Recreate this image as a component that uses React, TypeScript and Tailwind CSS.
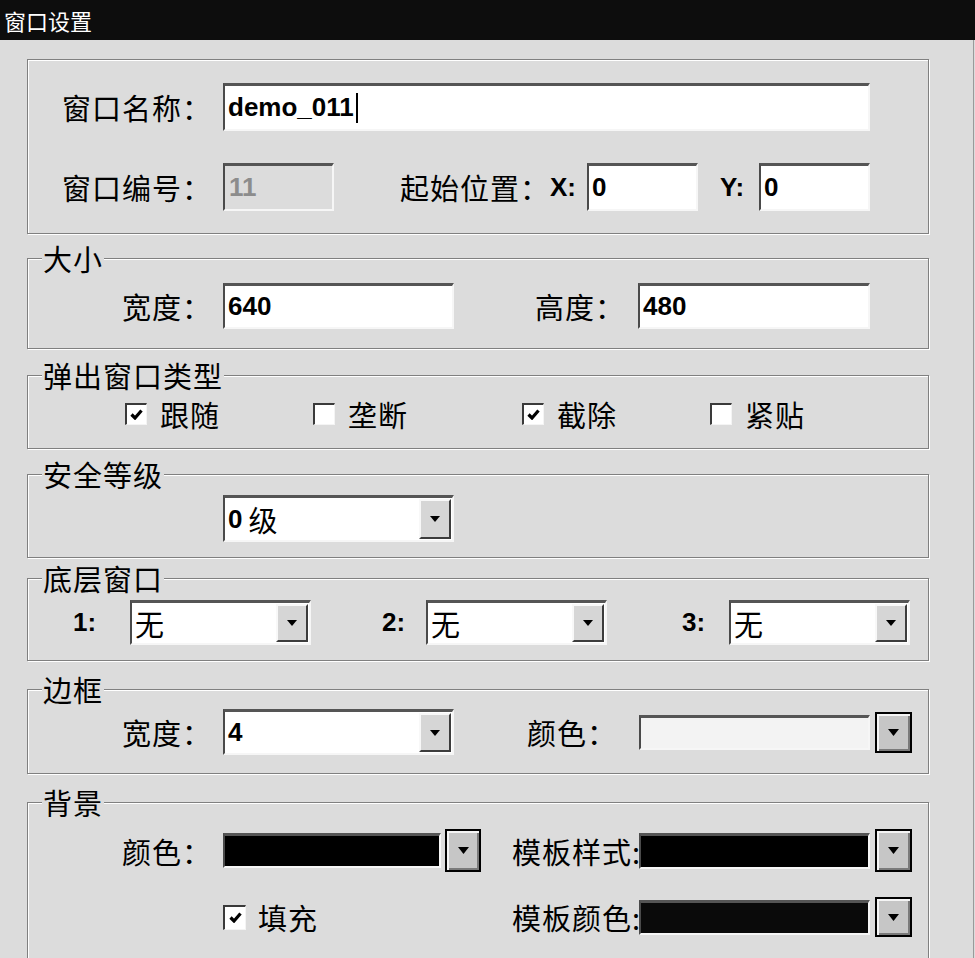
import React from "react";

const CJK = "font-['Noto_Sans_CJK_SC','Liberation_Sans',sans-serif] text-[29px] tracking-[1px] text-black";
const LAT = "font-['Liberation_Sans',Arial,sans-serif] font-bold text-[26px] text-black";
const SUNKEN =
  "border-t-[3px] border-l-[2px] border-r-2 border-b-2 border-t-[#555] border-l-[#4a4a4a] border-r-[#f6f6f6] border-b-[#f6f6f6]";

function Group({ title, className = "", children }: { title?: string; className?: string; children: React.ReactNode }) {
  return (
    <div className={`w-[902px] border border-[#808080] shadow-[inset_1px_1px_0_#fff,1px_1px_0_#fff] ${className}`}>
      {title && (
        <div className={`-mt-[16px] ml-[14px] w-fit bg-[#dcdcdc] px-[1px] h-[30px] leading-[30px] whitespace-nowrap ${CJK}`}>{title}</div>
      )}
      {children}
    </div>
  );
}

function Tri({ w = 10, h = 6 }: { w?: number; h?: number }) {
  return (
    <svg width={w} height={h} viewBox={`0 0 ${w} ${h}`}>
      <polygon points={`0,0 ${w},0 ${w / 2},${h}`} fill="#000" />
    </svg>
  );
}

function Label({ text, className = "" }: { text: string; className?: string }) {
  return <div className={`${CJK} leading-[32px] shrink-0 whitespace-nowrap ${className}`}>{text}</div>;
}

function Combo({ className = "", children }: { className?: string; children: React.ReactNode }) {
  return (
    <div className={`flex bg-white ${SUNKEN} shrink-0 ${className}`}>
      <div className="flex-1 flex items-center pl-[3px]">{children}</div>
      <div className="w-[32px] my-[1px] mr-[1px] flex items-center justify-center bg-[#d6d6d6] border-t-2 border-l-2 border-t-[#f8f8f8] border-l-[#f8f8f8] border-r-2 border-b-2 border-r-[#3c3c3c] border-b-[#3c3c3c]">
        <Tri w={10} h={6} />
      </div>
    </div>
  );
}

function PickBtn({ className = "" }: { className?: string }) {
  return (
    <div
      className={`shrink-0 flex items-center justify-center border-2 border-black bg-[#c6c6c6] shadow-[inset_2px_2px_0_#f4f4f4,inset_-2px_-2px_0_#7a7a7a] ${className}`}
    >
      <Tri w={11} h={7} />
    </div>
  );
}

function Check({ checked, className = "w-[22px] h-[22px]" }: { checked: boolean; className?: string }) {
  return (
    <div
      className={`shrink-0 bg-white flex items-center justify-center border-t-2 border-l-2 border-t-[#3a3a3a] border-l-[#3a3a3a] border-r border-b border-r-[#f4f4f4] border-b-[#f4f4f4] ${className}`}
    >
      {checked && (
        <svg width="13" height="11" viewBox="0 0 13 11">
          <polyline points="1.5,5.5 5,9 11.5,1.5" fill="none" stroke="#000" strokeWidth="3.2" />
        </svg>
      )}
    </div>
  );
}

function CheckItem({ checked, text, className = "" }: { checked: boolean; text: string; className?: string }) {
  return (
    <div className={`flex items-center shrink-0 ${className}`}>
      <Check checked={checked} />
      <Label text={text} className="ml-[13px]" />
    </div>
  );
}

export default function App() {
  return (
    <div className="w-[975px] h-[958px] bg-[#dcdcdc] overflow-hidden flex flex-col">
      <div className="h-[40px] shrink-0 bg-[#0d0d0d] pl-[4px] leading-[40px] text-white text-[22px] font-['Noto_Sans_CJK_SC',sans-serif]">
        窗口设置
      </div>
      <div className="flex-1 flex">
        <div className="w-[974px] border-r border-[#9a9a9a] pl-[27px] pt-[19px] flex flex-col">
          {/* Group 1 */}
          <Group className="pt-[23px] pb-[22px]">
            <div className="flex items-center pl-[34px] h-[48px]">
              <Label text="窗口名称：" className="w-[161px]" />
              <div className={`w-[647px] h-[48px] bg-white ${SUNKEN} flex items-center pl-[3px]`}>
                <span className={LAT}>demo_011</span>
                <span className="ml-[2px] w-[2px] h-[30px] bg-black" />
              </div>
            </div>
            <div className="flex items-center pl-[34px] h-[48px] mt-[32px]">
              <Label text="窗口编号：" className="w-[161px]" />
              <div className={`w-[111px] h-[48px] bg-[#dcdcdc] ${SUNKEN} flex items-center pl-[4px] shrink-0`}>
                <span className="font-['Liberation_Sans',Arial,sans-serif] font-bold text-[26px] text-[#8c8c8c]">11</span>
              </div>
              <Label text="起始位置：" className="ml-[66px] w-[150px]" />
              <div className={`${LAT} text-[24px] w-[37px] shrink-0`}>X:</div>
              <div className={`w-[111px] h-[48px] bg-white ${SUNKEN} flex items-center pl-[3px] shrink-0`}>
                <span className={LAT}>0</span>
              </div>
              <div className={`${LAT} text-[24px] ml-[22px] w-[39px] shrink-0`}>Y:</div>
              <div className={`w-[111px] h-[48px] bg-white ${SUNKEN} flex items-center pl-[3px] shrink-0`}>
                <span className={LAT}>0</span>
              </div>
            </div>
          </Group>

          {/* 大小 */}
          <Group title="大小" className="mt-[24px] pb-[19px]">
            <div className="flex items-center pl-[94px] mt-[10px] h-[46px]">
              <Label text="宽度：" className="w-[101px]" />
              <div className={`w-[231px] h-[46px] bg-white ${SUNKEN} flex items-center pl-[3px] shrink-0`}>
                <span className={LAT}>640</span>
              </div>
              <Label text="高度：" className="ml-[81px] w-[103px]" />
              <div className={`w-[232px] h-[46px] bg-white ${SUNKEN} flex items-center pl-[3px] shrink-0`}>
                <span className={LAT}>480</span>
              </div>
            </div>
          </Group>

          {/* 弹出窗口类型 */}
          <Group title="弹出窗口类型" className="mt-[26px] pb-[19px]">
            <div className="flex items-center pl-[97px] mt-[9px] h-[30px]">
              <CheckItem checked text="跟随" className="w-[188px]" />
              <CheckItem checked={false} text="垄断" className="w-[209px]" />
              <CheckItem checked text="截除" className="w-[188px]" />
              <CheckItem checked={false} text="紧贴" />
            </div>
          </Group>

          {/* 安全等级 */}
          <Group title="安全等级" className="mt-[25px] pb-[15px]">
            <div className="flex pl-[195px] mt-[6px]">
              <Combo className="w-[231px] h-[47px]">
                <span className={LAT}>0</span>
                <span className={`${CJK} ml-[6px] leading-[32px]`}>级</span>
              </Combo>
            </div>
          </Group>

          {/* 底层窗口 */}
          <Group title="底层窗口" className="mt-[20px] pb-[15px]">
            <div className="flex items-center pl-[45px] mt-[7px] h-[45px]">
              <div className={`${LAT} text-[24px] w-[57px] shrink-0`}>1:</div>
              <Combo className="w-[181px] h-[45px]">
                <span className={`${CJK} leading-[32px]`}>无</span>
              </Combo>
              <div className={`${LAT} text-[24px] ml-[71px] w-[44px] shrink-0`}>2:</div>
              <Combo className="w-[181px] h-[45px]">
                <span className={`${CJK} leading-[32px]`}>无</span>
              </Combo>
              <div className={`${LAT} text-[24px] ml-[75px] w-[47px] shrink-0`}>3:</div>
              <Combo className="w-[181px] h-[45px]">
                <span className={`${CJK} leading-[32px]`}>无</span>
              </Combo>
            </div>
          </Group>

          {/* 边框 */}
          <Group title="边框" className="mt-[28px] pb-[18px]">
            <div className="flex items-center pl-[94px] mt-[5px] h-[46px]">
              <Label text="宽度：" className="w-[101px]" />
              <Combo className="w-[231px] h-[46px]">
                <span className={LAT}>4</span>
              </Combo>
              <Label text="颜色：" className="ml-[73px] w-[112px]" />
              <div className={`w-[231px] h-[35px] bg-[#f3f3f3] ${SUNKEN} shrink-0`} />
              <PickBtn className="ml-[5px] w-[37px] h-[41px]" />
            </div>
          </Group>

          {/* 背景 */}
          <Group title="背景" className="mt-[28px] pb-[40px]">
            <div className="flex items-center pl-[94px] mt-[12px] h-[43px]">
              <Label text="颜色：" className="w-[101px]" />
              <div className={`w-[218px] h-[35px] bg-black ${SUNKEN} shrink-0`} />
              <PickBtn className="ml-[4px] w-[36px] h-[43px]" />
              <Label text="模板样式:" className="ml-[31px] w-[127px] tracking-[0.5px]" />
              <div className={`w-[231px] h-[36px] bg-black ${SUNKEN} shrink-0`} />
              <PickBtn className="ml-[5px] w-[37px] h-[43px]" />
            </div>
            <div className="flex items-center pl-[195px] mt-[25px] h-[40px]">
              <div className="w-[258px] flex items-center shrink-0">
                <Check checked className="w-[23px] h-[25px]" />
                <Label text="填充" className="ml-[12px]" />
              </div>
              <Label text="模板颜色:" className="ml-[31px] w-[127px] tracking-[0.5px]" />
              <div className={`w-[231px] h-[35px] bg-[#0a0a0a] ${SUNKEN} shrink-0`} />
              <PickBtn className="ml-[5px] w-[37px] h-[40px]" />
            </div>
          </Group>
        </div>
      </div>
    </div>
  );
}
